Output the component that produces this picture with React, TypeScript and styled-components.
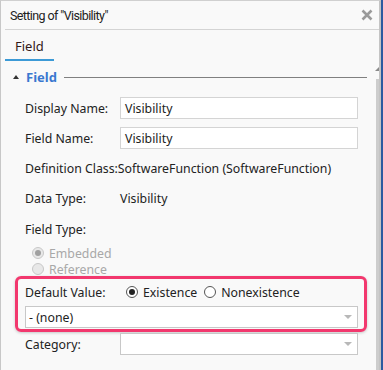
import styled, { createGlobalStyle } from 'styled-components';
import React from 'react';

const GlobalStyle = createGlobalStyle`
  html, body {
    margin: 0;
    padding: 0;
    background: #2c5aa0;
  }
  body {
    font-family: 'Noto Sans', 'Liberation Sans', sans-serif;
    font-size: 12.3px;
    color: #222;
  }
`;

const Dialog = styled.div`
  width: 381px;
  height: 370px;
  box-sizing: border-box;
  background: #f9f9f9;
  border-left: 1px solid #c8c8c8;
  border-top: 1px solid #d0d0d0;
  border-right: 2px solid #c4c4c4;
  display: flex;
  flex-direction: column;
  overflow: hidden;
`;

const TitleBar = styled.div`
  height: 28px;
  display: flex;
  align-items: center;
  justify-content: space-between;
  padding: 0 6px 0 5px;
  margin: 0 0 0 4px;
  border-bottom: 1px solid #d4d4d4;
`;

const Title = styled.span`
  font-family: Roboto, 'Noto Sans', sans-serif;
  font-size: 12.5px;
  letter-spacing: -0.6px;
`;

const CloseButton = styled.span`
  display: flex;
`;

const TabBar = styled.div`
  display: flex;
  padding: 0 4px;
  margin-top: 5px;
`;

const Tab = styled.div<{ active?: boolean }>`
  padding: 3px 10px 5px 10px;
  line-height: 16px;
  font-size: 13px;
  border-bottom: 2px solid ${(p) => (p.active ? '#3c9ad6' : 'transparent')};
  color: #331a1a;
`;

const Body = styled.div`
  flex: 1;
  display: flex;
  overflow: hidden;
`;

const Content = styled.div`
  flex: 1;
  padding: 8px 8px 0 12px;
`;

const Scrollbar = styled.div`
  width: 7px;
  margin-right: 2px;
  display: flex;
  flex-direction: column;
  align-items: center;
  padding-top: 6px;
`;

const ScrollArrow = styled.div`
  width: 0;
  height: 0;
  border-left: 4px solid transparent;
  border-right: 4px solid transparent;
  border-bottom: 4px solid #8a8a8a;
`;

const ScrollThumb = styled.div`
  margin-top: 8px;
  width: 5px;
  flex: 1;
  background: #cdcdcd;
`;

const SectionHeader = styled.div`
  display: flex;
  align-items: center;
  height: 16px;
  margin-bottom: 8px;
`;

const Caret = styled.span`
  width: 0;
  height: 0;
  border-left: 3.5px solid transparent;
  border-right: 3.5px solid transparent;
  border-bottom: 4px solid #333;
  margin: 0 7px 0 0;
`;

const SectionTitle = styled.span`
  color: #3a78d0;
  font-weight: bold;
  font-size: 13px;
`;

const SectionLine = styled.span`
  flex: 1;
  height: 1px;
  background: #808080;
  margin-left: 7px;
`;

const Rows = styled.div`
  padding-left: 12px;
  display: flex;
  flex-direction: column;
`;

const Row = styled.div<{ h?: number }>`
  display: flex;
  align-items: center;
  height: ${(p) => p.h ?? 30}px;
`;

const Label = styled.span<{ auto?: boolean }>`
  width: ${(p) => (p.auto ? 'auto' : '95px')};
  flex-shrink: 0;
  white-space: nowrap;
`;

const TextInput = styled.div`
  width: 238px;
  height: 22px;
  box-sizing: border-box;
  border: 1px solid #d4d4d4;
  background: #fff;
  display: flex;
  align-items: center;
  padding-left: 4px;
`;

const Select = styled.div<{ w: number }>`
  width: ${(p) => p.w}px;
  height: 22px;
  box-sizing: border-box;
  border: 1px solid #c8c8c8;
  background: #fff;
  display: flex;
  align-items: center;
  justify-content: space-between;
  padding: 0 5px 0 3px;
`;

const SelectArrow = styled.span`
  width: 0;
  height: 0;
  border-left: 4px solid transparent;
  border-right: 4px solid transparent;
  border-top: 4px solid #b8b8b8;
`;

const RadioItem = styled.label<{ disabled?: boolean }>`
  display: flex;
  align-items: center;
  gap: 5px;
  color: ${(p) => (p.disabled ? '#a8a8a8' : '#222')};
  height: 16px;
`;

const RadioCircle = styled.span<{ checked?: boolean; disabled?: boolean }>`
  width: 12px;
  height: 12px;
  box-sizing: border-box;
  border-radius: 50%;
  border: 1px solid ${(p) => (p.disabled ? '#c8c8c8' : '#555')};
  background: ${(p) => (p.disabled ? '#e8e8e8' : '#fff')};
  display: flex;
  align-items: center;
  justify-content: center;
  &::after {
    content: '';
    display: ${(p) => (p.checked ? 'block' : 'none')};
    width: 6px;
    height: 6px;
    border-radius: 50%;
    background: ${(p) => (p.disabled ? '#a0a0a0' : '#222')};
  }
`;

const RadioGroup = styled.div`
  display: flex;
  flex-direction: column;
  padding-left: 7px;
  margin-top: -1px;
`;

const Highlight = styled.div`
  margin: -1px 0 0 -10px;
  width: 352px;
  box-sizing: border-box;
  border: 3px solid #f2386e;
  border-radius: 6px;
  padding: 1px 7px 1px 7px;
  display: flex;
  flex-direction: column;
  gap: 2px;
  box-shadow: 0 1px 3px rgba(0, 0, 0, 0.2);
`;

const InlineRadios = styled.div`
  display: flex;
  gap: 7px;
  margin-left: 6px;
`;

const Radio = ({ label, checked, disabled }: { label: string; checked?: boolean; disabled?: boolean }) => (
  <RadioItem disabled={disabled}>
    <RadioCircle checked={checked} disabled={disabled} />
    {label}
  </RadioItem>
);

const CloseIcon = () => (
  <svg width='12' height='12' viewBox='0 0 12 12'>
    <path d='M1.5 1.5 L10.5 10.5 M10.5 1.5 L1.5 10.5' stroke='#9a9a9a' strokeWidth='2.6' />
  </svg>
);

const App = () => {
  return (
    <>
      <GlobalStyle />
      <Dialog>
        <TitleBar>
          <Title>Setting of "Visibility"</Title>
          <CloseButton>
            <CloseIcon />
          </CloseButton>
        </TitleBar>
        <TabBar>
          <Tab active>Field</Tab>
        </TabBar>
        <Body>
          <Content>
            <SectionHeader>
              <Caret />
              <SectionTitle>Field</SectionTitle>
              <SectionLine />
            </SectionHeader>
            <Rows>
              <Row>
                <Label>Display Name:</Label>
                <TextInput>Visibility</TextInput>
              </Row>
              <Row>
                <Label>Field Name:</Label>
                <TextInput>Visibility</TextInput>
              </Row>
              <Row>
                <Label auto>Definition Class:</Label>
                <span>SoftwareFunction (SoftwareFunction)</span>
              </Row>
              <Row>
                <Label>Data Type:</Label>
                <span>Visibility</span>
              </Row>
              <Row h={33}>
                <Label>Field Type:</Label>
              </Row>
              <RadioGroup>
                <Radio label='Embedded' checked disabled />
                <Radio label='Reference' disabled />
              </RadioGroup>
              <Highlight>
                <Row h={24}>
                  <Label>Default Value:</Label>
                  <InlineRadios>
                    <Radio label='Existence' checked />
                    <Radio label='Nonexistence' />
                  </InlineRadios>
                </Row>
                <Select w={333}>
                  <span>- (none)</span>
                  <SelectArrow />
                </Select>
              </Highlight>
              <Row h={24}>
                <Label>Category:</Label>
                <Select w={238}>
                  <span />
                  <SelectArrow />
                </Select>
              </Row>
            </Rows>
          </Content>
          <Scrollbar>
            <ScrollArrow />
            <ScrollThumb />
          </Scrollbar>
        </Body>
      </Dialog>
    </>
  );
};

export default App;
